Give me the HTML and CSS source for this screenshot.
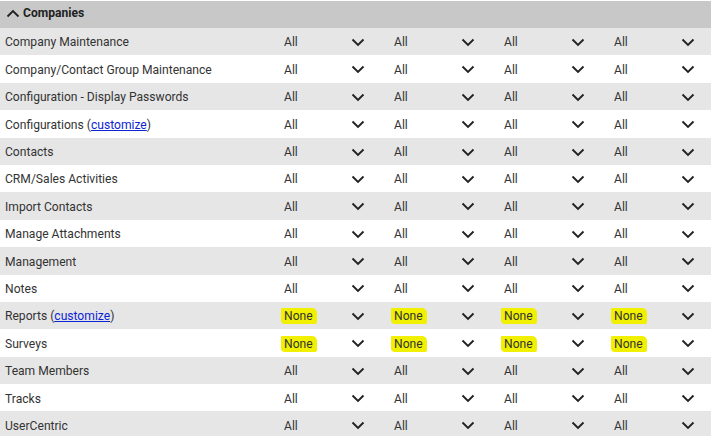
FILE: index.html
```html
<!DOCTYPE html>
<html>
<head>
<meta charset="utf-8">
<link rel="stylesheet" href="styles.css">
</head>
<body>
<div class="panel">
  <div class="header">
    <svg class="up" width="14" height="9" viewBox="0 0 14 9"><path d="M1.5 7.5 L7 2 L12.5 7.5" fill="none" stroke="#222" stroke-width="1.8"/></svg>
    <span>Companies</span>
  </div>
  <div id="rows"></div>
</div>
<template id="chev"><svg class="chev" width="14" height="9" viewBox="0 0 14 9"><path d="M1.5 1.5 L7 7 L12.5 1.5" fill="none" stroke="#222" stroke-width="1.9"/></svg></template>
<script>
var rows = [
  ["Company Maintenance"],
  ["Company/Contact Group Maintenance"],
  ["Configuration - Display Passwords"],
  ["Configurations", true],
  ["Contacts"],
  ["CRM/Sales Activities"],
  ["Import Contacts"],
  ["Manage Attachments"],
  ["Management"],
  ["Notes"],
  ["Reports", true, "None"],
  ["Surveys", false, "None"],
  ["Team Members"],
  ["Tracks"],
  ["UserCentric"]
];
var chev = document.getElementById('chev').innerHTML;
var html = '';
rows.forEach(function (r, i) {
  var label = r[0];
  if (r[1]) label += ' (<a href="#">customize</a>)';
  var val = r[2] || 'All';
  html += '<div class="row ' + (i % 2 ? 'even' : 'odd') + '"><div class="label">' + label + '</div>';
  for (var c = 0; c < 4; c++) {
    var v = val === 'None' ? '<span class="hl">None</span>' : val;
    html += '<div class="cell"><span class="val">' + v + '</span>' + chev + '</div>';
  }
  html += '</div>';
});
document.getElementById('rows').innerHTML = html;
</script>
</body>
</html>
```
FILE: styles.css
```css
html, body {
  margin: 0;
  padding: 0;
  background: #fff;
}
body {
  font-family: Roboto, "Liberation Sans", sans-serif;
  font-size: 12.1px;
  color: #333;
  overflow: hidden;
}
.panel {
  padding-top: 1px;
}
.header {
  height: 27px;
  background: #c8c8c8;
  display: flex;
  align-items: center;
  padding-left: 6px;
  padding-bottom: 3px;
  box-sizing: border-box;
  font-weight: bold;
  font-size: 12.1px;
  color: #222;
}
.header .up {
  margin-right: 3px;
  margin-top: 1px;
}
.row {
  height: 27.4px;
  display: flex;
  align-items: center;
  box-sizing: border-box;
  padding-top: 1.5px;
}
.row.odd { background: #e6e6e6; }
.row.even { background: #fff; }
.label {
  width: 284px;
  padding-left: 5px;
  box-sizing: border-box;
  flex: none;
}
.label a {
  color: #0b24d6;
  text-decoration: underline;
}
.cell {
  width: 110px;
  flex: none;
  display: flex;
  align-items: center;
}
.val {
  width: 67px;
  flex: none;
}
.hl {
  background: #f0f000;
  padding: 1px 4px 1px 3px;
  margin-left: -3px;
  border-radius: 1px 5px 2px 4px;
}
.chev {
  display: block;
  margin-top: 0;
}
```
